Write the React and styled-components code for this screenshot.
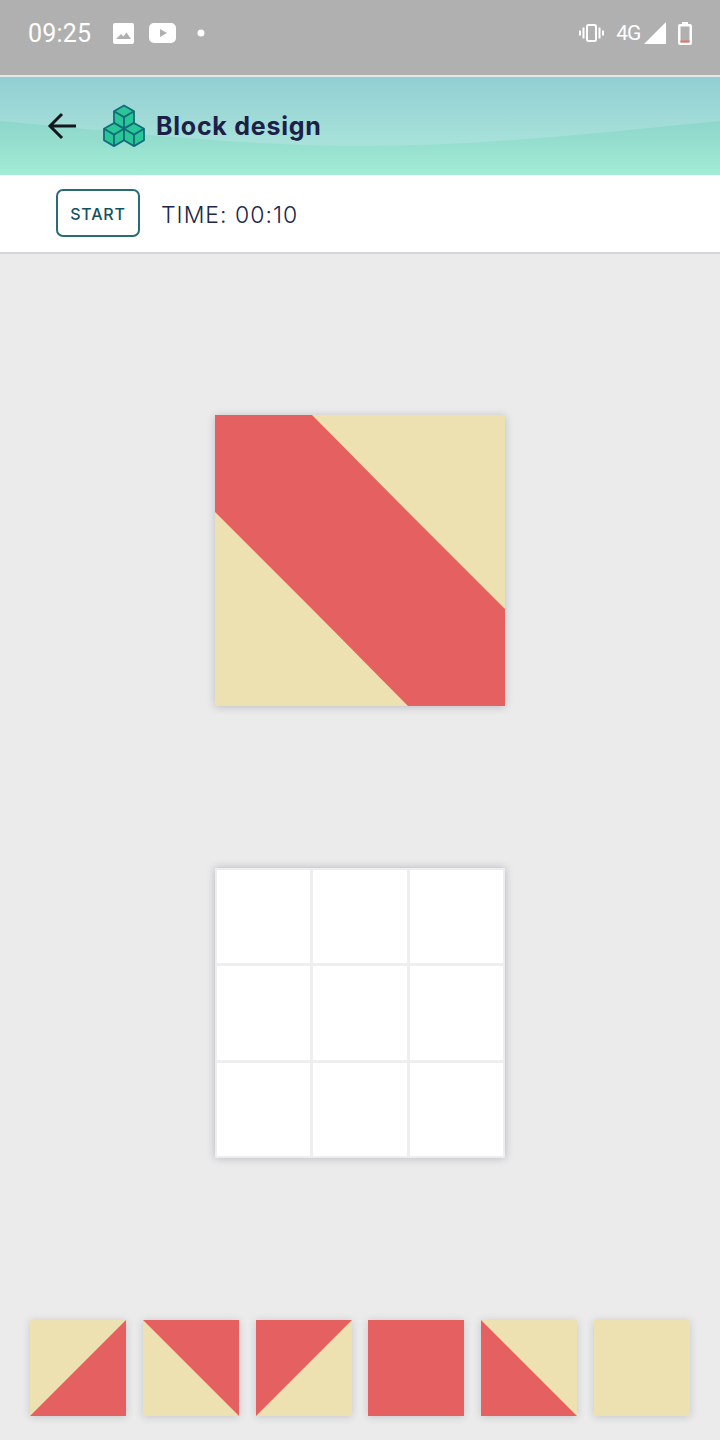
import React from "react";
import styled, { createGlobalStyle } from "styled-components";

const RED = "#e56161";
const SAND = "#eee1b1";

// soft stops so the diagonals come out smooth across the tile seams
const split = (dir, first, second) =>
  `linear-gradient(${dir}, ${first} calc(50% - 0.5px), ${second} calc(50% + 0.5px))`;

const fills = {
  red: RED,
  sand: SAND,
  br: split("to bottom right", SAND, RED),
  tr: split("to top right", SAND, RED),
  tl: split("to bottom right", RED, SAND),
  bl: split("to top right", RED, SAND),
};

const targetTiles = ["red", "bl", "sand", "tr", "red", "bl", "sand", "tr", "red"];
const trayTiles = ["br", "tr", "tl", "red", "bl", "sand"];

const GlobalStyle = createGlobalStyle`
  html, body {
    margin: 0;
    padding: 0;
    background: #ebebeb;
  }
  * {
    box-sizing: border-box;
  }
`;

const Page = styled.div`
  width: 720px;
  height: 1440px;
  display: flex;
  flex-direction: column;
  overflow: hidden;
  font-family: Inter, "Open Sans", sans-serif;
`;

const StatusBar = styled.div`
  height: 77px;
  flex: none;
  display: flex;
  align-items: flex-start;
  justify-content: space-between;
  padding: 20px 28px 0 28px;
  background: #b0b0b0;
  border-bottom: 2px solid #e6e6e6;
  color: #fff;
`;

const StatusGroup = styled.div`
  display: flex;
  align-items: center;
  height: 26px;
`;

const Clock = styled.span`
  font-family: Roboto, sans-serif;
  font-size: 25px;
  letter-spacing: 0.2px;
  margin-right: 22px;
`;

const Network = styled.span`
  font-family: "Liberation Sans Narrow", Roboto, sans-serif;
  font-size: 21px;
  margin: 0 4px 0 12px;
  letter-spacing: -1.2px;
`;

const StatusIcon = styled.svg`
  display: block;
  flex: none;
  margin-right: ${(p) => p.$gap || 0}px;
`;

const Header = styled.header`
  position: relative;
  height: 98px;
  flex: none;
  display: flex;
  align-items: center;
  padding: 0 0 0 47px;
  background: linear-gradient(180deg, #92cfd3 0%, #a8e2da 70%);
`;

const Wave = styled.svg`
  position: absolute;
  left: 0;
  top: 0;
`;

const BackIcon = styled.svg`
  position: relative;
  flex: none;
  margin-right: 26px;
`;

const Logo = styled.svg`
  position: relative;
  flex: none;
  margin-right: 11px;
`;

const Title = styled.h1`
  position: relative;
  margin: 0;
  font-size: 25px;
  font-weight: 700;
  color: #1d2046;
  letter-spacing: 0.75px;
`;

const Toolbar = styled.div`
  height: 79px;
  flex: none;
  display: flex;
  align-items: center;
  padding: 0 0 2px 56px;
  background: #fff;
  border-bottom: 2px solid #d5d5dc;
`;

const StartButton = styled.button`
  width: 84px;
  height: 48px;
  padding: 3px 0 0;
  margin-right: 21px;
  background: #fff;
  border: 2px solid #2a6b7a;
  border-radius: 7px;
  font-family: inherit;
  font-size: 16px;
  font-weight: 500;
  letter-spacing: 0.8px;
  color: #11525f;
`;

const Timer = styled.span`
  margin-top: 4px;
  font-size: 23px;
  font-weight: 300;
  letter-spacing: 1px;
  color: #22264a;
`;

const Board = styled.main`
  flex: 1;
  display: flex;
  flex-direction: column;
  align-items: center;
  gap: 162px;
  padding-top: 161px;
  background: #ebebeb;
`;

const Pattern = styled.div`
  width: 290px;
  height: 291px;
  flex: none;
  display: grid;
  grid-template-columns: repeat(3, 1fr);
  grid-template-rows: repeat(3, 1fr);
  box-shadow: 0 1px 8px rgba(50, 55, 85, 0.25);
`;

const Tile = styled.div`
  background: ${(p) => fills[p.$kind]};
`;

const Slots = styled.div`
  width: 290px;
  height: 290px;
  flex: none;
  display: grid;
  grid-template-columns: repeat(3, 1fr);
  grid-template-rows: repeat(3, 1fr);
  gap: 3px;
  padding: 2px;
  background: #eeeeee;
  box-shadow: 0 0 8px rgba(50, 55, 85, 0.3);
`;

const Slot = styled.div`
  background: #fff;
`;

const Tray = styled.div`
  width: 660px;
  flex: none;
  display: flex;
  justify-content: space-between;
`;

const TrayTile = styled(Tile)`
  width: 96px;
  height: 96px;
  box-shadow: 0 1px 8px rgba(50, 55, 85, 0.2);
`;

const CUBES = [
  [21, 13],
  [11, 30.5],
  [31, 30.5],
];

const WAVE_PATH = "M0 44C110 54 240 69 360 69C480 69 600 56 720 44V98H0z";

const App = () => {
  return (
    <Page>
      <GlobalStyle />
      <StatusBar>
        <StatusGroup>
          <Clock>09:25</Clock>
          <StatusIcon $gap={15} width="21" height="21" viewBox="0 0 21 21">
            <path
              d="M2 0h17a2 2 0 0 1 2 2v17a2 2 0 0 1-2 2H2a2 2 0 0 1-2-2V2a2 2 0 0 1 2-2zM3 16h15l-4.5-6.5-3.2 4-2.3-2.5z"
              fill="#fff"
              fillRule="evenodd"
            />
          </StatusIcon>
          <StatusIcon $gap={21} width="27" height="20" viewBox="0 0 27 20">
            <path
              d="M5 0h17a5 5 0 0 1 5 5v10a5 5 0 0 1-5 5H5a5 5 0 0 1-5-5V5a5 5 0 0 1 5-5zM11 6v8l7-4z"
              fill="#fff"
              fillRule="evenodd"
            />
          </StatusIcon>
          <StatusIcon width="8" height="8" viewBox="0 0 8 8">
            <circle cx="4" cy="4" r="3.5" fill="#fff" />
          </StatusIcon>
        </StatusGroup>
        <StatusGroup>
          <StatusIcon width="25" height="18" viewBox="0 0 25 18">
            <rect x="8" y="1" width="9" height="16" rx="1.5" fill="none" stroke="#fff" strokeWidth="2" />
            <path d="M4.5 3.5v11M20.5 3.5v11" stroke="#fff" strokeWidth="2" />
            <path d="M1 6.5v5M24 6.5v5" stroke="#fff" strokeWidth="2" />
          </StatusIcon>
          <Network>4G</Network>
          <StatusIcon $gap={12} width="22" height="22" viewBox="0 0 22 22">
            <path d="M22 0v22H0z" fill="#fff" />
          </StatusIcon>
          <StatusIcon width="14" height="23" viewBox="0 0 14 23">
            <path
              d="M4 0h6v2h2a2 2 0 0 1 2 2v17a2 2 0 0 1-2 2H2a2 2 0 0 1-2-2V4a2 2 0 0 1 2-2h2zM2.5 4.5v16h9v-16z"
              fill="#fff"
              fillRule="evenodd"
            />
            <rect x="2.5" y="18.5" width="9" height="2" fill="#f0705a" />
          </StatusIcon>
        </StatusGroup>
      </StatusBar>

      <Header>
        <Wave width="720" height="98" viewBox="0 0 720 98">
          <defs>
            <linearGradient id="waveFade" x1="0" y1="0" x2="0" y2="1">
              <stop offset="0" stopColor="#8dd6cb" />
              <stop offset="1" stopColor="#a2ecd4" />
            </linearGradient>
          </defs>
          <path d={WAVE_PATH} fill="url(#waveFade)" />
        </Wave>
        <BackIcon width="30" height="28" viewBox="0 0 30 28">
          <path
            d="M29 14H3M15 2L3 14l12 12"
            fill="none"
            stroke="#15171c"
            strokeWidth="3"
          />
        </BackIcon>
        <Logo width="42" height="44" viewBox="0 0 42 44">
          {CUBES.map(([x, y], index) => (
            <g key={index} fill="#2ac698" stroke="#136c79" strokeWidth="1.8" strokeLinejoin="round">
              <path
                d={`M${x} ${y - 11.5}l10 5.8v11.5l-10 5.8-10-5.8V${y - 5.7}z`}
              />
              <path d={`M${x - 10} ${y - 5.7}l10 5.8 10-5.8M${x} ${y + 0.1}v11.5`} fill="none" />
            </g>
          ))}
        </Logo>
        <Title>Block design</Title>
      </Header>

      <Toolbar>
        <StartButton>START</StartButton>
        <Timer>TIME: 00:10</Timer>
      </Toolbar>

      <Board>
        <Pattern>
          {targetTiles.map((kind, index) => (
            <Tile key={index} $kind={kind} />
          ))}
        </Pattern>
        <Slots>
          {Array.from({ length: 9 }, (_, index) => (
            <Slot key={index} />
          ))}
        </Slots>
        <Tray>
          {trayTiles.map((kind, index) => (
            <TrayTile key={index} $kind={kind} />
          ))}
        </Tray>
      </Board>
    </Page>
  );
};

export default App;
